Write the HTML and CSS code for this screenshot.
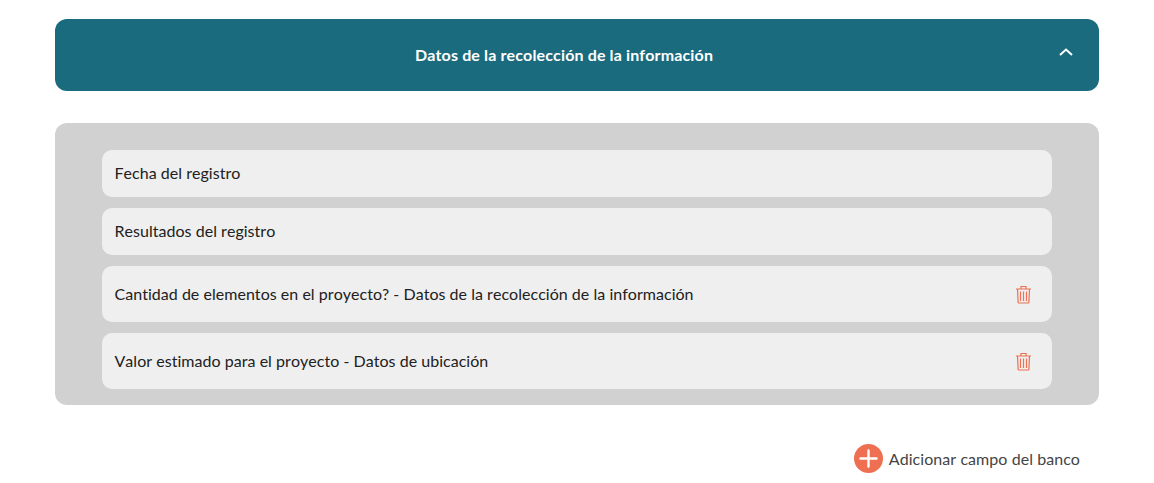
FILE: index.html
```html
<!DOCTYPE html>
<html lang="es">
<head>
    <meta charset="UTF-8">
    <title>Datos de la recolección de la información</title>
    <link rel="stylesheet" href="styles.css">
</head>
<body>
    <div class="section-header">
        <h2>Datos de la recolección de la información</h2>
        <svg class="chevron" width="16" height="10" viewBox="0 0 16 10" fill="none" stroke="#fff" stroke-width="2">
            <path d="M2 8l6-5.5L14 8"/>
        </svg>
    </div>

    <div class="fields">
        <div class="field"><span>Fecha del registro</span></div>
        <div class="field"><span>Resultados del registro</span></div>
        <div class="field tall">
            <span>Cantidad de elementos en el proyecto? - Datos de la recolección de la información</span>
            <svg class="trash" width="17" height="19" viewBox="0 0 17 19" fill="none" stroke="#ee6f52" stroke-width="1.2">
                <path d="M1 4h15M6 4V1.500h5V4M2.500 4l.6 13a1 1 0 0 0 1 1h8.800a1 1 0 0 0 1-1l.6-13M5.500 6.500V16M8.500 6.500V16M11.500 6.500V16"/>
            </svg>
        </div>
        <div class="field tall">
            <span>Valor estimado para el proyecto - Datos de ubicación</span>
            <svg class="trash" width="17" height="19" viewBox="0 0 17 19" fill="none" stroke="#ee6f52" stroke-width="1.2">
                <path d="M1 4h15M6 4V1.500h5V4M2.500 4l.6 13a1 1 0 0 0 1 1h8.800a1 1 0 0 0 1-1l.6-13M5.500 6.500V16M8.500 6.500V16M11.500 6.500V16"/>
            </svg>
        </div>
    </div>

    <div class="add-row">
        <span class="add-icon">
            <svg width="29" height="29" viewBox="0 0 29 29" fill="none" stroke="#fff" stroke-width="2.4" stroke-linecap="round">
                <path d="M14.500 6.500v16M6.500 14.500h16"/>
            </svg>
        </span>
        <span class="add-label">Adicionar campo del banco</span>
    </div>
</body>
</html>
```

FILE: styles.css
```css
* {
    box-sizing: border-box;
}

body {
    margin: 0;
    padding: 19px 55px 0;
    background: #fff;
    font-family: Lato, "Open Sans", sans-serif;
    font-kerning: none;
    font-variant-ligatures: none;
    color: #212121;
    overflow: hidden;
}

.section-header {
    height: 72px;
    display: flex;
    align-items: center;
    justify-content: center;
    position: relative;
    padding-right: 26px;
    background: #1a6b7d;
    border-radius: 12px;
}

.section-header h2 {
    margin: 0 0 1px;
    font-size: 16px;
    font-weight: 700;
    letter-spacing: 0.14px;
    color: #fff;
}

.chevron {
    position: absolute;
    right: 25px;
    top: 28px;
}

.fields {
    margin-top: 32px;
    height: 282px;
    padding: 27px 47px 0;
    display: flex;
    flex-direction: column;
    gap: 11px;
    background: #d1d1d1;
    border-radius: 12px;
}

.field {
    height: 47px;
    flex: none;
    display: flex;
    align-items: center;
    justify-content: space-between;
    padding: 0 20px 0 13px;
    background: #efefef;
    border-radius: 10px;
    font-size: 16px;
    letter-spacing: 0.03px;
}

.field span {
    margin: 0 0 2px -0.5px;
}

.field.tall {
    height: 56px;
}

.add-row {
    margin-top: 39px;
    padding-right: 19px;
    display: flex;
    align-items: center;
    justify-content: flex-end;
    gap: 6px;
}

.add-icon {
    width: 29px;
    height: 29px;
    display: flex;
    border-radius: 50%;
    background: #ee6f52;
}

.add-label {
    font-size: 16px;
    letter-spacing: 0.06px;
    color: #444;
}
```
